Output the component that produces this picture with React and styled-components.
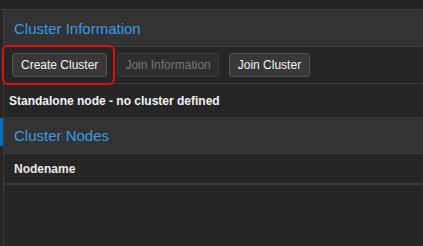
import React from "react";
import styled, { createGlobalStyle } from "styled-components";

const Global = createGlobalStyle`
  html, body { margin: 0; padding: 0; background: #262626; }
  body { font-family: "Liberation Sans", Arial, sans-serif; width: 423px; height: 246px; overflow: hidden; }
`;

const Page = styled.div`
  display: flex;
  flex-direction: column;
  height: 246px;
`;

const TopStrip = styled.div`
  height: 9px;
  background: #232323;
  border-bottom: 1px solid #3a3a3a;
  flex: none;
`;

const Body = styled.div`
  display: flex;
  flex: 1;
`;

const Rail = styled.div`
  width: 3px;
  flex: none;
  border-right: 1px solid #3c3c3c;
  background: #262626;
  display: flex;
  flex-direction: column;
`;

const RailMark = styled.div`
  margin-top: 108px;
  height: 28px;
  background: #0a6ebd;
`;

const Main = styled.div`
  flex: 1;
  display: flex;
  flex-direction: column;
`;

const PanelHeader = styled.div`
  height: 36px;
  background: #333333;
  border-bottom: 1px solid #3d3d3d;
  display: flex;
  align-items: center;
  padding-left: 10px;
  color: #3a9be6;
  font-size: 15px;
`;

const Toolbar = styled.div`
  height: 36px;
  display: flex;
  align-items: center;
  gap: 10px;
  padding-left: 8px;
  border-bottom: 1px solid #3d3d3d;
  position: relative;
`;

const Button = styled.button`
  height: 24px;
  padding: 0 ${(p) => (p.disabled ? "7px" : "8px")};
  font-family: "Liberation Sans", Arial, sans-serif;
  font-size: 12px;
  border: 1px solid #4e4e4e;
  border-radius: 3px;
  color: ${(p) => (p.disabled ? "#7a7a7a" : "#f4f4f4")};
  background: ${(p) => (p.disabled ? "#2e2e2e" : "#383838")};
  border-color: ${(p) => (p.disabled ? "#3e3e3e" : "#555555")};
`;

const Highlight = styled.div`
  position: relative;
  &::after {
    content: "";
    position: absolute;
    left: -10px;
    top: -8px;
    right: -8px;
    bottom: -8px;
    border: 2px solid #e01010;
    border-radius: 6px;
    pointer-events: none;
  }
`;

const StatusRow = styled.div`
  height: 33px;
  display: flex;
  align-items: center;
  padding-left: 5px;
  color: #f2f2f2;
  font-weight: bold;
  font-size: 12px;
`;

const TableHead = styled.div`
  height: 29px;
  display: flex;
  align-items: center;
  padding-left: 10px;
  color: #e8e8e8;
  font-weight: bold;
  font-size: 12px;
  border-bottom: 2px solid #3a3a3a;
`;

export default function App() {
  return (
    <>
      <Global />
      <Page>
        <TopStrip />
        <Body>
          <Rail>
            <RailMark />
          </Rail>
          <Main>
            <PanelHeader>Cluster Information</PanelHeader>
            <Toolbar>
              <Highlight>
                <Button>Create Cluster</Button>
              </Highlight>
              <Button disabled>Join Information</Button>
              <Button>Join Cluster</Button>
            </Toolbar>
            <StatusRow>Standalone node - no cluster defined</StatusRow>
            <PanelHeader>Cluster Nodes</PanelHeader>
            <TableHead>Nodename</TableHead>
          </Main>
        </Body>
      </Page>
    </>
  );
}
